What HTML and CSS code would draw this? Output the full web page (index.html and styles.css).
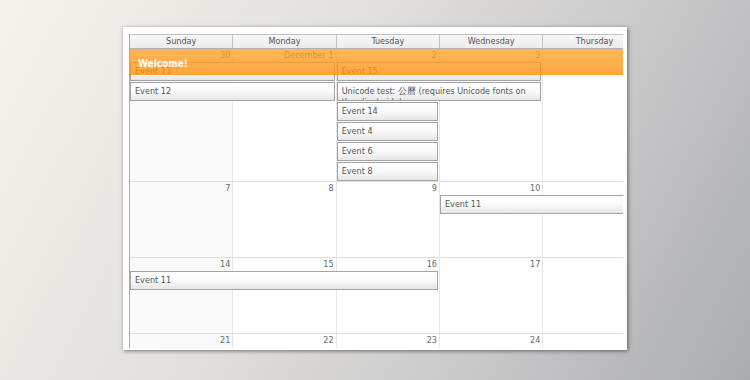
FILE: index.html
```html
<!DOCTYPE html>
<html lang="en">
<head>
<meta charset="utf-8">
<title>Month view</title>
<link rel="stylesheet" href="styles.css">
</head>
<body>
<div class="card">
  <div class="calendar">
    <div class="cal-inner">
      <div class="cal-head">
        <div class="head-cell">Sunday</div>
        <div class="head-cell">Monday</div>
        <div class="head-cell">Tuesday</div>
        <div class="head-cell">Wednesday</div>
        <div class="head-cell">Thursday</div>
      </div>

      <div class="week week-tall">
        <div class="day d1 off"><span class="day-num">30</span></div>
        <div class="day d2"><span class="day-num">December 1</span></div>
        <div class="day d3"><span class="day-num">2</span></div>
        <div class="day d4"><span class="day-num">3</span></div>
        <div class="day d5"></div>

        <div class="event lane1 from1 span2">Event 13</div>
        <div class="event lane1 from3 span2">Event 15</div>
        <div class="event lane2 from1 span2">Event 12</div>
        <div class="event lane2 from3 span2 wrap">Unicode test: 公曆 (requires Unicode fonts on the client side)</div>
        <div class="event lane3 from3 span1">Event 14</div>
        <div class="event lane4 from3 span1">Event 4</div>
        <div class="event lane5 from3 span1">Event 6</div>
        <div class="event lane6 from3 span1">Event 8</div>
      </div>

      <div class="week">
        <div class="day d1 off"><span class="day-num">7</span></div>
        <div class="day d2"><span class="day-num">8</span></div>
        <div class="day d3"><span class="day-num">9</span></div>
        <div class="day d4"><span class="day-num">10</span></div>
        <div class="day d5"></div>

        <div class="event lane1 from4 span2 open-end">Event 11</div>
      </div>

      <div class="week">
        <div class="day d1 off"><span class="day-num">14</span></div>
        <div class="day d2"><span class="day-num">15</span></div>
        <div class="day d3"><span class="day-num">16</span></div>
        <div class="day d4"><span class="day-num">17</span></div>
        <div class="day d5"></div>

        <div class="event lane1 from1 span3">Event 11</div>
      </div>

      <div class="week week-last">
        <div class="day d1 off"><span class="day-num">21</span></div>
        <div class="day d2"><span class="day-num">22</span></div>
        <div class="day d3"><span class="day-num">23</span></div>
        <div class="day d4"><span class="day-num">24</span></div>
        <div class="day d5"></div>
      </div>
    </div>

    <div class="welcome">Welcome!</div>
  </div>
</div>
</body>
</html>
```

FILE: styles.css
```css
html, body {
  margin: 0;
  height: 100%;
}

body {
  background: linear-gradient(118deg, #f6f2ed 0%, #e2e0dd 40%, #c9c9ca 70%, #abacaf 100%);
  font-family: "DejaVu Sans Condensed", "DejaVu Sans", sans-serif;
  font-stretch: condensed;
  font-size: 9px;
  color: #555;
  overflow: hidden;
}

/* white sheet holding the calendar */
.card {
  margin: 27px 0 0 123px;
  width: 504px;
  height: 323px;
  box-sizing: border-box;
  padding: 7px 4px 0 6px;
  background: #fff;
  box-shadow: 1px 1px 4px rgba(0, 0, 0, 0.5);
}

.calendar {
  position: relative;
  width: 494px;
  height: 314px;
  overflow: hidden;
  border-left: 1px solid #aaa;
  box-sizing: border-box;
}

.cal-inner {
  width: 517px;
}

/* day-of-week header */
.cal-head {
  display: grid;
  grid-template-columns: repeat(5, 103.333px);
  border-top: 1px solid #c2c2c2;
  border-bottom: 1px solid #b0b0b0;
  background: linear-gradient(#f7f7f7, #ececec);
}

.head-cell {
  height: 13px;
  line-height: 13px;
  text-align: center;
  border-right: 1px solid #c2c2c2;
  color: #555;
}

/* one week row: 13px day-number strip, then 20px event lanes */
.week {
  display: grid;
  grid-template-columns: repeat(5, 103.333px);
  grid-template-rows: 13px 20px 43px;
}

.week-tall {
  grid-template-rows: 13px repeat(6, 20px);
}

.week-last {
  grid-template-rows: 13px 60px;
}

.day {
  grid-row: 1 / -1;
  box-sizing: border-box;
  border-right: 1px solid #e6e6e6;
  border-bottom: 1px solid #dedede;
  background: #fff;
}

.day.off {
  background: #f9f9f9;
}

.d1 { grid-column: 1; }
.d2 { grid-column: 2; }
.d3 { grid-column: 3; }
.d4 { grid-column: 4; }
.d5 { grid-column: 5; }

.day-num {
  display: block;
  height: 13px;
  line-height: 13px;
  text-align: right;
  padding-right: 2px;
  color: #6a6a6a;
}

/* event boxes */
.event {
  height: 19px;
  margin: 0 2px 1px 0;
  box-sizing: border-box;
  border: 1px solid #a3a3a3;
  background: linear-gradient(#ffffff 0%, #fafafa 50%, #e6e6e6 100%);
  padding: 0 4px;
  line-height: 17px;
  color: #555;
  white-space: nowrap;
  overflow: hidden;
}

.event.open-end {
  margin-right: 0;
  border-right: 0;
}

.event.wrap {
  white-space: normal;
  line-height: 11px;
  padding-top: 3px;
}

.lane1 { grid-row: 2; }
.lane2 { grid-row: 3; }
.lane3 { grid-row: 4; }
.lane4 { grid-row: 5; }
.lane5 { grid-row: 6; }
.lane6 { grid-row: 7; }

.from1 { grid-column-start: 1; }
.from3 { grid-column-start: 3; }
.from4 { grid-column-start: 4; }

.span1 { grid-column-end: span 1; }
.span2 { grid-column-end: span 2; }
.span3 { grid-column-end: span 3; }

/* translucent banner laid over the first week */
.welcome {
  position: absolute;
  left: 0;
  right: 0;
  top: 15px;
  height: 26px;
  padding: 4px 0 0 8px;
  box-sizing: border-box;
  background: linear-gradient(rgba(255, 160, 40, 0.76), rgba(255, 145, 15, 0.8));
  color: #fff;
  font-size: 10px;
  font-weight: bold;
  line-height: 22px;
}
```
